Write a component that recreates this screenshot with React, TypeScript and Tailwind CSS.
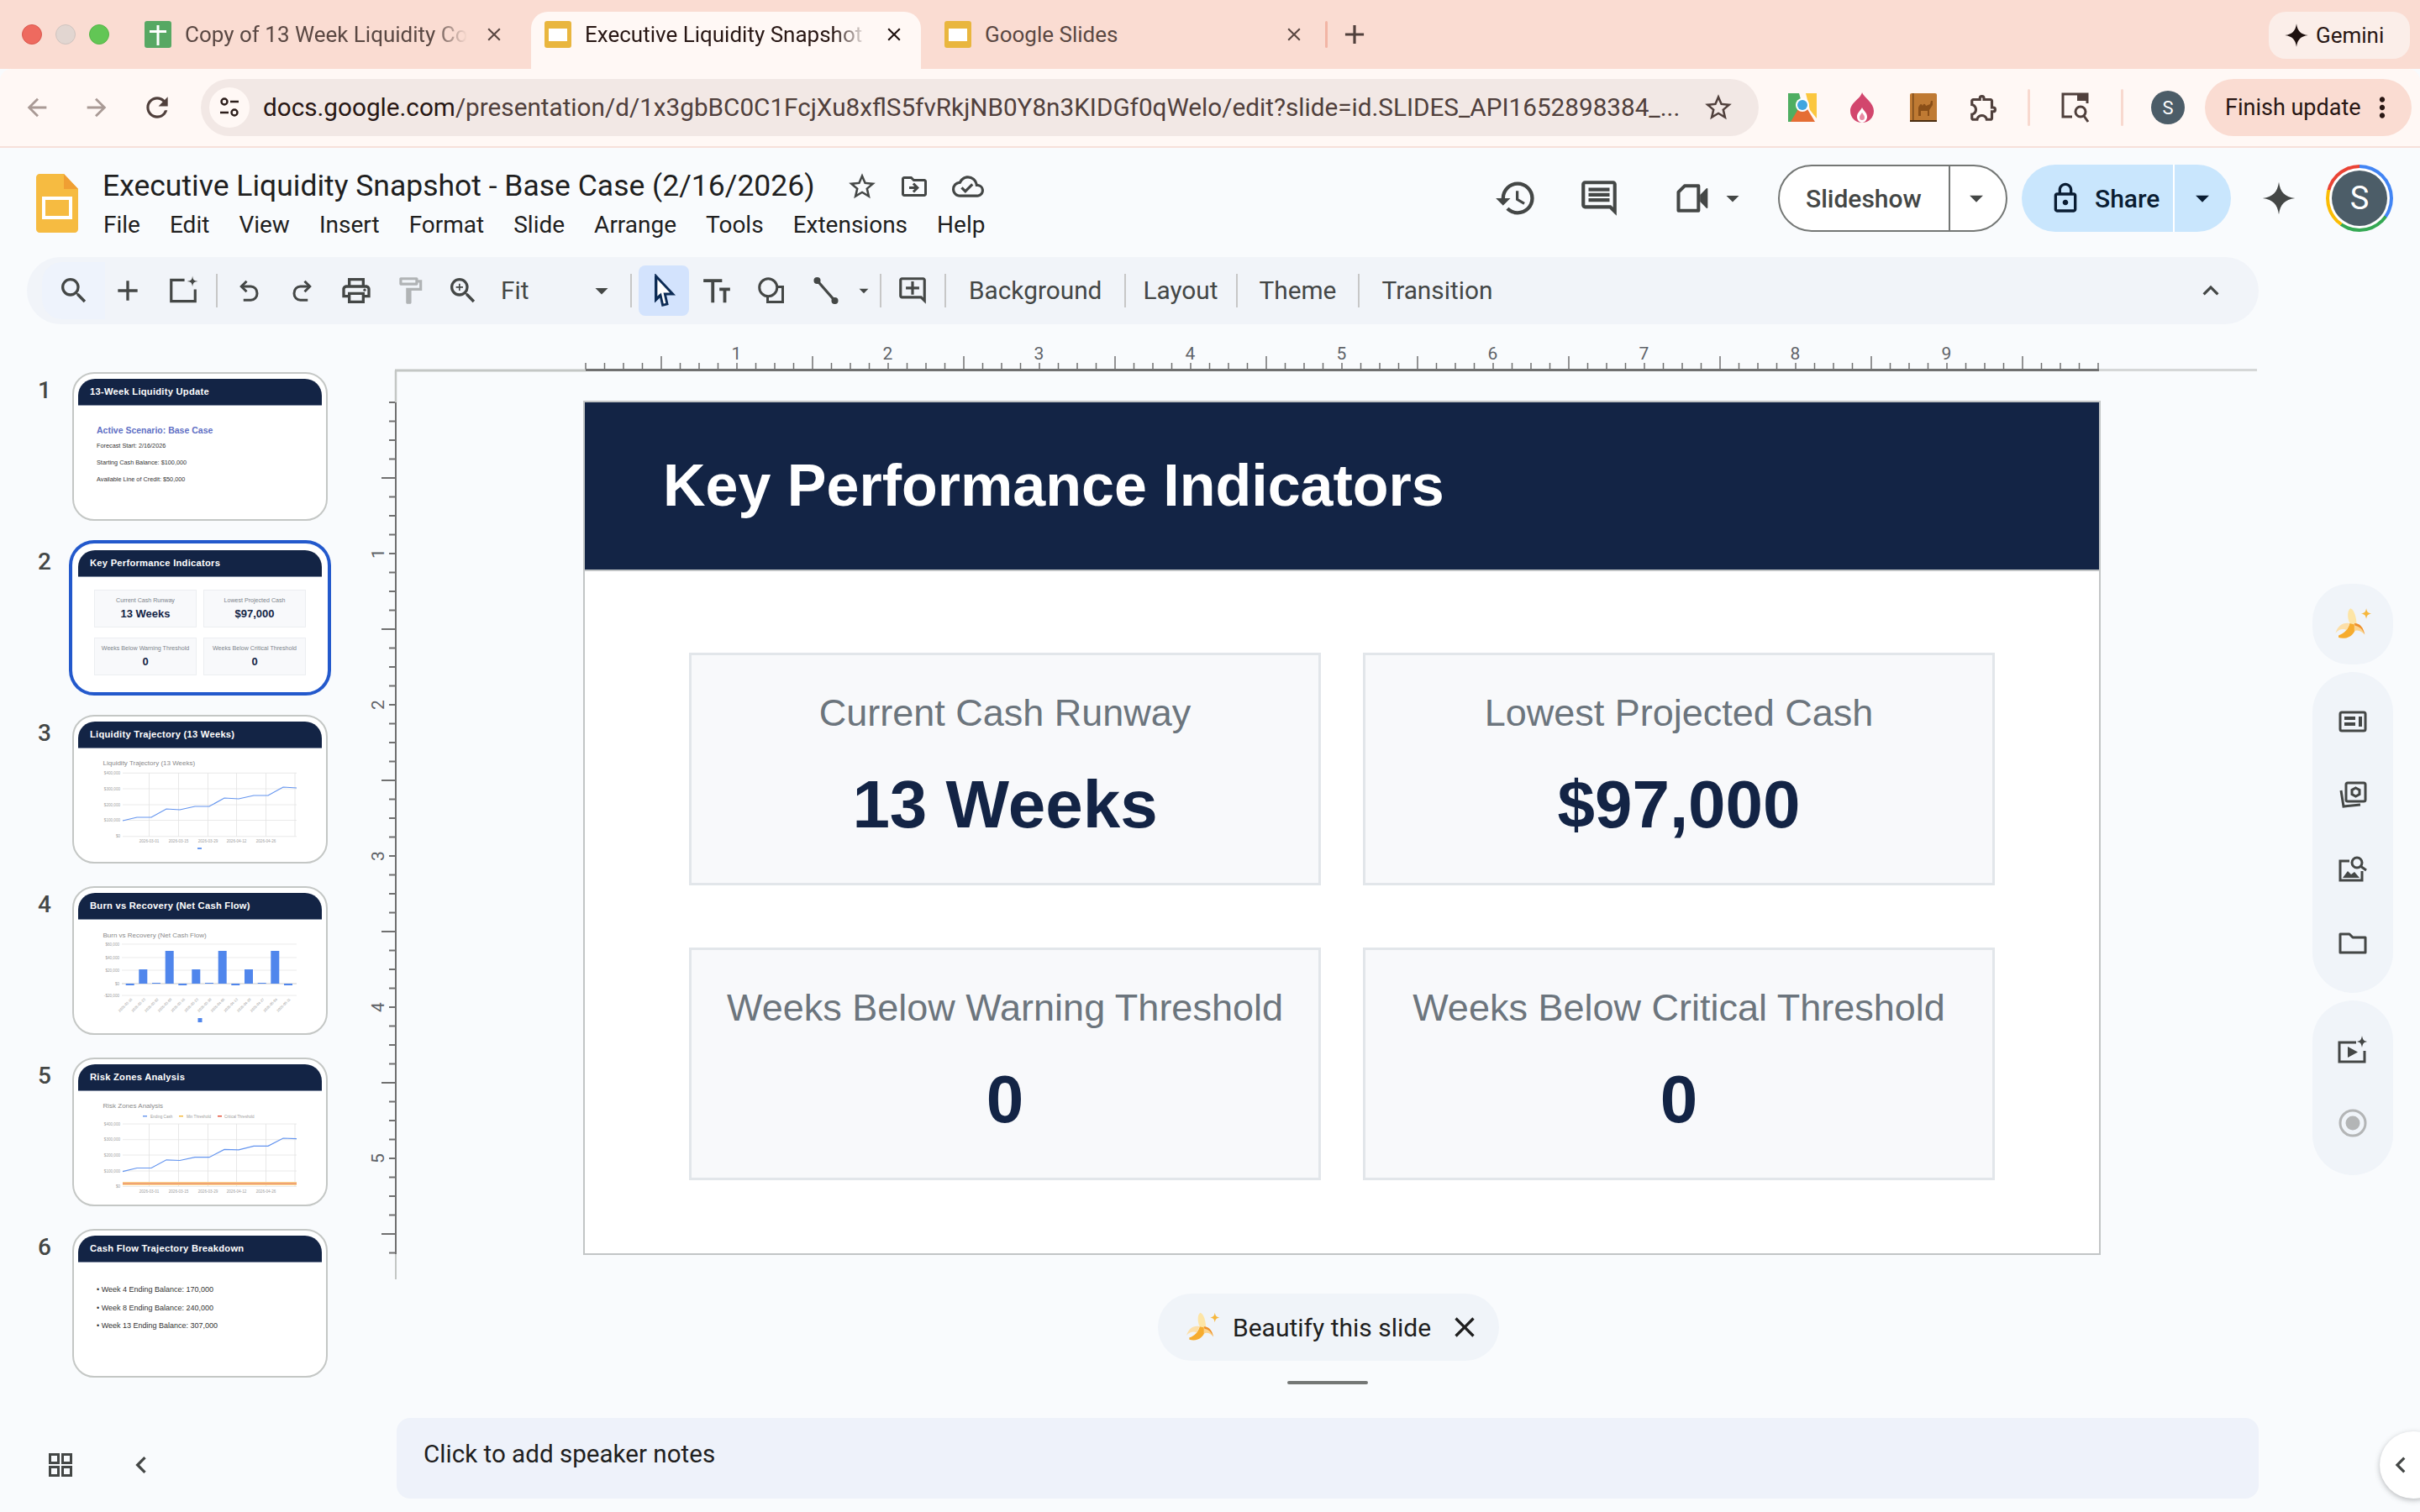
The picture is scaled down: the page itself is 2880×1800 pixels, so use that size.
import React from "react";
import {
  MdSearch, MdAdd, MdOutlinePrint, MdOutlineFormatPaint, MdOutlineZoomIn,
  MdOutlineAddComment, MdArrowDropDown, MdStarBorder, MdOutlineDriveFileMove, MdOutlineCloudDone, MdOutlineLock,
  MdRefresh, MdArrowBack, MdArrowForward, MdClose, MdOutlineExtension, MdMoreVert, MdChevronLeft, MdKeyboardArrowUp,
  MdHistory, MdOutlineComment, MdAdd as MdPlus,
} from "react-icons/md";

const Spark = ({ size = 40, color = "#444746" }: { size?: number; color?: string }) => (
  <svg width={size} height={size} viewBox="0 0 24 24"><path d="M12 1C13 8 16 11 23 12C16 13 13 16 12 23C11 16 8 13 1 12C8 11 11 8 12 1Z" fill={color} /></svg>
);

const Banana = ({ size = 44 }: { size?: number }) => (
  <svg width={size} height={size} viewBox="0 0 56 48">
    <path d="M24 23C20 15 21 5 25 3C30 5 33 15 33 25Z" fill="#fde5a6" />
    <path d="M9 42C20 45 31 40 33 25L24 23C22 31 16 37 9 39Z" fill="#f6ac2f" />
    <path d="M24 23C16 21 8 25 5 36C10 30 16 30 20 32Z" fill="#fcdfa8" />
    <path d="M30 23C38 23 42 29 44 38C40 34 36 31 30 33Z" fill="#fbd48e" />
    <path d="M30 23C38 23 42 29 44 38C41 31 37 27 31 26Z" fill="#ee8f2c" />
    <path d="M46 3C47 8 48 9 53 10C48 11 47 12 46 17C45 12 44 11 39 10C44 9 45 8 46 3Z" fill="#f6b73c" />
  </svg>
);

const SheetsIcon = () => (
  <svg width="32" height="32" viewBox="0 0 32 32"><rect width="32" height="32" rx="3" fill="#57a863" /><rect x="14.5" y="5" width="3" height="24" fill="#fff" /><rect x="6" y="11" width="20" height="3" fill="#fff" /></svg>
);
const SlidesTabIcon = () => (
  <svg width="32" height="32" viewBox="0 0 32 32"><rect width="32" height="32" rx="3" fill="#e9b63e" /><rect x="5" y="9" width="22" height="15" fill="#fff" /></svg>
);

const Tab = ({ icon, text, active, mask }: { icon: React.ReactNode; text: string; active?: boolean; mask?: boolean }) => (
  <div className={`flex h-[68px] w-[464px] items-center rounded-t-[20px] pb-[14px] pl-4 ${active ? "bg-[#fff8f5] text-[#281714]" : "text-[#5a4843]"}`}>
    {icon}
    <div className={`ml-4 w-[336px] whitespace-nowrap text-[26px] ${mask ? "[mask-image:linear-gradient(90deg,#000_88%,transparent)]" : ""}`}>{text}</div>
    <MdClose className={`ml-[19px] ${active ? "text-[#1f1210]" : "text-[#5a4843]"}`} size={26} />
  </div>
);

const ExtChrome = () => (
  <svg width="34" height="34" viewBox="0 0 34 34">
    <path d="M0 0H13L17 14L8 34H0Z" fill="#4fae61" /><path d="M21 0H34V30L26 20Z" fill="#fbc73f" /><path d="M3 34L12 19H23L32 34Z" fill="#e56e34" />
    <circle cx="17" cy="14" r="8" fill="#fff" /><circle cx="17" cy="14" r="6" fill="#3fa6e0" />
  </svg>
);
const ExtFlame = () => (
  <svg width="30" height="36" viewBox="0 0 30 36">
    <path d="M15 0C17 6 29 12 29 22C29 30 23 36 15 36C7 36 1 30 1 22C1 12 13 8 15 0Z" fill="#d2466d" />
    <path d="M15 18C17 22 21 24 21 29C21 33 18 36 15 36C12 36 9 33 9 29C9 24 13 22 15 18Z" fill="#fff" />
    <path d="M15 24C16 26 18 27 18 30C18 32 17 33 15 33C13 33 12 32 12 30C12 27 14 26 15 24Z" fill="#e88aa4" />
  </svg>
);
const ExtCamel = () => (
  <svg width="32" height="34" viewBox="0 0 32 34">
    <rect width="32" height="34" rx="2" fill="#bf7a33" /><rect y="32" width="32" height="2" fill="#4a2d10" /><rect x="3" width="1.5" height="32" fill="#7a4a1c" />
    <path d="M10 27V17C12 12 14 12 15 15C16 12 18 12 19 15L24 13L25 9H27V14L23 20V27H21V21H13V27Z" fill="#8a4f18" />
  </svg>
);
const TabSearch = () => (
  <svg width="36" height="38" viewBox="0 0 36 38" fill="none" stroke="#50403c" strokeWidth="3">
    <path d="M14 30H3V3H32V14" /><rect x="20" y="2" width="13" height="9" fill="#50403c" stroke="none" /><circle cx="24" cy="24" r="6" /><path d="M28 29L33 36" />
  </svg>
);
const SiteInfo = () => (
  <svg width="26" height="26" viewBox="0 0 26 26" fill="none" stroke="#2c1e1b" strokeWidth="2.4">
    <circle cx="7" cy="6" r="3.5" /><path d="M14 6H24M2 19H12" /><circle cx="19" cy="19" r="3.5" />
  </svg>
);

const SlidesLogo = () => (
  <svg width="50" height="70" viewBox="0 0 50 70">
    <path d="M4 0H33L50 18V66C50 68 48 70 46 70H4C2 70 0 68 0 66V4C0 2 2 0 4 0Z" fill="#f6bb41" />
    <path d="M33 0L50 18H33Z" fill="#f09f33" />
    <rect x="9" y="29" width="32" height="23" fill="#f6bb41" stroke="#fff" strokeWidth="4" />
  </svg>
);

const CursorIcon = () => (
  <svg width="32" height="40" viewBox="0 0 24 30" fill="none" stroke="#0c2b55" strokeWidth="2.4" strokeLinejoin="miter">
    <path d="M5 2L20 18H13L15 27L11 28L9 19L5 23Z" fill="#fff" strokeWidth="2.2" /><path d="M5 2L5 23L9 19" stroke="#0c2b55" />
  </svg>
);
const TextBoxIcon = () => (
  <svg width="38" height="38" viewBox="0 0 24 24" fill="none" stroke="#444746" strokeWidth="2.4">
    <path d="M2 4.500H16M9 4.500V21" /><path d="M14 11H22M18 11V21" />
  </svg>
);
const ShapeIcon = () => (
  <svg width="36" height="36" viewBox="0 0 24 24" fill="none" stroke="#444746" strokeWidth="2">
    <circle cx="9.5" cy="9.5" r="7" /><path d="M17 9H21V21H9V17" />
  </svg>
);
const LineIcon = () => (
  <svg width="36" height="36" viewBox="0 0 24 24" fill="#444746" stroke="#444746" strokeWidth="2.2">
    <path d="M5 4L19 20" /><circle cx="5" cy="4" r="1.6" /><circle cx="19" cy="20" r="1.6" />
  </svg>
);
const NewSlideIcon = () => (
  <svg width="38" height="38" viewBox="0 0 24 24" fill="none" stroke="#444746" strokeWidth="2">
    <path d="M13 4H3V20H21V11" /><path d="M19 1C19.400 4 20 4.600 23 5C20 5.400 19.400 6 19 9C18.600 6 18 5.400 15 5C18 4.600 18.600 4 19 1Z" fill="#444746" stroke="none" />
  </svg>
);
const UndoIcon = ({ flip }: { flip?: boolean }) => (
  <svg width="30" height="30" viewBox="0 0 24 24" fill="none" stroke="#444746" strokeWidth="2.4" className={flip ? "-scale-x-100" : ""}>
    <path d="M10 3L5 8L10 13" /><path d="M5 8H14C17.300 8 20 10.700 20 14.500C20 18.300 17.300 21 14 21H7" />
  </svg>
);
const CameraIcon = () => (
  <svg width="44" height="44" viewBox="0 0 24 24" fill="none" stroke="#444746" strokeWidth="2.2" strokeLinejoin="round">
    <path d="M7 4H16V20H3V8Z" /><path d="M17.500 10L21.500 6V18L17.500 14Z" fill="#444746" strokeWidth="1" />
  </svg>
);

const Sep = ({ className = "" }: { className?: string }) => <div className={`h-[40px] w-[2px] shrink-0 bg-[#c7c7c7] ${className}`} />;
const Slot = ({ w, children, className = "" }: { w: string; children: React.ReactNode; className?: string }) => (
  <div className={`flex shrink-0 items-center justify-center text-[#444746] ${w} ${className}`}>{children}</div>
);
const Word = ({ children }: { children: React.ReactNode }) => <span className="text-[29.800px] text-[#444746]">{children}</span>;

const Header = ({ title }: { title: string }) => (
  <div className="flex h-[32px] items-center border-b border-[#7f8aa0] bg-[#132445] pl-[14px] font-['Liberation_Sans',Arial,sans-serif] text-[11.2px] font-bold tracking-[0.25px] whitespace-nowrap text-white">{title}</div>
);

const Mini = ({ label, value }: { label: string; value: string }) => (
  <div className="flex h-[45px] flex-col items-center border border-[#eceef1] bg-[#f8f9fb] pt-[6px] font-['Liberation_Sans',Arial,sans-serif]">
    <div className="text-[7.1px] leading-[12px] whitespace-nowrap text-[#7d848b]">{label}</div>
    <div className="mt-[1px] text-[13px] leading-[18px] font-bold text-[#132445]">{value}</div>
  </div>
);

const chartX = [84.5, 119.5, 154.5, 188.5, 223.5, 258];
const Trend = ({ grid, pts, labels, xy }: { grid: number[]; pts: string; labels: string[]; xy: number }) => (
  <>
    {grid.map((y, i) => (
      <g key={y}>
        <line x1="53" x2="260" y1={y} y2={y} stroke="#e4e4e4" strokeWidth="0.8" />
        <text x="50" y={y + 1.6} fontSize="4.6" textAnchor="end" fill="#a0a0a0">{labels[i]}</text>
      </g>
    ))}
    {chartX.map((x) => <line key={x} x1={x} x2={x} y1={grid[0]} y2={grid[4]} stroke="#e2e2e2" strokeWidth="0.8" />)}
    {["2026-03-01", "2026-03-15", "2026-03-29", "2026-04-12", "2026-04-26"].map((t, i) => (
      <text key={t} x={chartX[i]} y={xy} fontSize="4.6" textAnchor="middle" fill="#a0a0a0">{t}</text>
    ))}
    <polyline points={pts} fill="none" stroke="#6394ef" strokeWidth="1.2" />
  </>
);
const money = ["$400,000", "$300,000", "$200,000", "$100,000", "$0"];

const Chart3 = () => (
  <svg width="290" height="131" viewBox="0 0 290 131" className="font-['Liberation_Sans',Arial,sans-serif]">
    <text x="29.500" y="20" fontSize="8" fill="#8a8a8a">Liquidity Trajectory (13 Weeks)</text>
    <Trend grid={[29.3, 48, 67, 85.5, 104.8]} labels={money} xy={112}
      pts="53,86 70,82 87,82 105,72 121,73 139,69 156,69 174,59 191,60 209,56 226,56 244,46 260,47" />
    <rect x="142" y="118" width="5" height="2" fill="#6d9cf0" />
  </svg>
);
const Chart4 = () => {
  const xs = [61.7, 77.3, 93, 108.7, 124.3, 140.3, 156, 171.7, 187.3, 203, 218.7, 234.3, 250];
  const tops = [78, 59, 75, 37, 78, 59, 75, 37, 78, 59, 75, 37, 78];
  const dates = ["2026-02-16", "2026-02-23", "2026-03-02", "2026-03-09", "2026-03-16", "2026-03-23", "2026-03-30", "2026-04-06", "2026-04-13", "2026-04-20", "2026-04-27", "2026-05-04", "2026-05-11"];
  const gy = [29, 45, 60, 76, 90];
  const gl = ["$60,000", "$40,000", "$20,000", "$0", "-$20,000"];
  return (
    <svg width="290" height="131" viewBox="0 0 290 131" className="font-['Liberation_Sans',Arial,sans-serif]">
      <text x="29.500" y="21" fontSize="8" fill="#8a8a8a">Burn vs Recovery (Net Cash Flow)</text>
      {gy.map((y, i) => (
        <g key={y}>
          <line x1="52" x2="260" y1={y} y2={y} stroke={i === 3 ? "#bdbdbd" : "#e6e6e6"} strokeWidth="0.8" />
          <text x="49" y={y + 1.6} fontSize="4.6" textAnchor="end" fill="#a0a0a0">{gl[i]}</text>
        </g>
      ))}
      {xs.map((x, i) => {
        const t = tops[i];
        return <rect key={x} x={x - 5} y={t > 76 ? 76 : t} width="10" height={t > 76 ? t - 76 : 76 - t} fill="#5086ec" />;
      })}
      {dates.map((d, i) => (
        <text key={d} x={xs[i] + 3} y="95" fontSize="4.200" textAnchor="end" fill="#a0a0a0" transform={`rotate(-45 ${xs[i] + 3} 95)`}>{d}</text>
      ))}
      <rect x="142.500" y="117" width="5" height="5" fill="#5086ec" />
    </svg>
  );
};
const Chart5 = () => (
  <svg width="290" height="131" viewBox="0 0 290 131" className="font-['Liberation_Sans',Arial,sans-serif]">
    <text x="29.500" y="20" fontSize="8" fill="#8a8a8a">Risk Zones Analysis</text>
    <rect x="77" y="29" width="5" height="1.500" fill="#6d9cf0" /><text x="86" y="31.500" fontSize="4.600" fill="#a0a0a0">Ending Cash</text>
    <rect x="120" y="29" width="5" height="1.500" fill="#f6bb41" /><text x="129" y="31.500" fontSize="4.600" fill="#a0a0a0">Min Threshold</text>
    <rect x="166" y="29" width="5" height="1.500" fill="#e5533d" /><text x="174" y="31.500" fontSize="4.600" fill="#a0a0a0">Critical Threshold</text>
    <Trend grid={[39, 57.700, 76, 95, 113.500]} labels={money} xy={121}
      pts="53,95.600 70,91.500 87,91.500 105,81.800 121,82.500 139,78.700 156,78.700 174,69.400 191,69.800 209,65.300 226,65.300 244,56 260,56.700" />
    <rect x="53" y="108" width="207" height="4" fill="#fbd38d" />
    <line x1="53" x2="260" y1="110" y2="110" stroke="#e5735d" strokeWidth="1" />
  </svg>
);

const Thumb = ({ n, title, active, children }: { n: number; title: string; active?: boolean; children: React.ReactNode }) => (
  <div className="mb-[27px] flex h-[177px]">
    <div className="w-[61px] text-right text-[28px] leading-[44px] font-medium text-[#444746]">{n}</div>
    <div className={`ml-[25px] h-[177px] w-[304px] rounded-[26px] border-2 bg-white px-[5px] py-[6px] ${active ? "border-white shadow-[0_0_0_4px_#2359cc]" : "border-[#c4c7c5]"}`}>
      <div className="h-full overflow-hidden rounded-t-[20px]">
        <Header title={title} />
        {children}
      </div>
    </div>
  </div>
);

const Filmstrip = () => (
  <div className="flex w-[440px] shrink-0 flex-col pt-[57px]">
    <Thumb n={1} title="13-Week Liquidity Update">
      <div className="pt-[23px] pl-[22px] font-['Liberation_Sans',Arial,sans-serif]">
        <div className="mb-[3px] text-[10.500px] leading-[12px] font-bold text-[#5f70c4]">Active Scenario: Base Case</div>
        {["Forecast Start: 2/16/2026", "Starting Cash Balance: $100,000", "Available Line of Credit: $50,000"].map((t) => (
          <div key={t} className="text-[7.3px] leading-[20px] text-[#333]">{t}</div>
        ))}
      </div>
    </Thumb>
    <Thumb n={2} title="Key Performance Indicators" active>
      <div className="grid grid-cols-[122px_122px] gap-x-[8px] gap-y-[12px] pt-[15px] pl-[19px]">
        <Mini label="Current Cash Runway" value="13 Weeks" />
        <Mini label="Lowest Projected Cash" value="$97,000" />
        <Mini label="Weeks Below Warning Threshold" value="0" />
        <Mini label="Weeks Below Critical Threshold" value="0" />
      </div>
    </Thumb>
    <Thumb n={3} title="Liquidity Trajectory (13 Weeks)"><Chart3 /></Thumb>
    <Thumb n={4} title="Burn vs Recovery (Net Cash Flow)"><Chart4 /></Thumb>
    <Thumb n={5} title="Risk Zones Analysis"><Chart5 /></Thumb>
    <Thumb n={6} title="Cash Flow Trajectory Breakdown">
      <div className="pt-[22px] pl-[22px] font-['Liberation_Sans',Arial,sans-serif] text-[9px] leading-[21.500px] text-[#333]">
        <div>• Week 4 Ending Balance: 170,000</div>
        <div>• Week 8 Ending Balance: 240,000</div>
        <div>• Week 13 Ending Balance: 307,000</div>
      </div>
    </Thumb>
    <div className="mt-[57px] flex items-center pl-[58px]">
      <svg width="28" height="28" viewBox="0 0 28 28" fill="none" stroke="#444746" strokeWidth="3">
        <rect x="1.500" y="1.500" width="10" height="10" /><rect x="16.500" y="1.500" width="10" height="10" /><rect x="1.500" y="16.500" width="10" height="10" /><rect x="16.500" y="16.500" width="10" height="10" />
      </svg>
      <MdChevronLeft size={40} className="ml-[62px] text-[#444746]" />
    </div>
  </div>
);

const range = (n: number) => Array.from({ length: n }, (_, i) => i);

const TopRuler = () => (
  <svg width="2250" height="55" viewBox="440 386 2250 55" className="block shrink-0 overflow-visible font-[Roboto,sans-serif]">
    {range(81).map((i) => {
      const x = 697 + i * 22.5;
      return <line key={i} x1={x} x2={x} y1={i % 8 === 4 ? 424 : 432} y2="441" stroke="#707070" strokeWidth="1.5" />;
    })}
    {range(9).map((i) => <text key={i} x={876.5 + i * 180} y="428" fontSize="21" textAnchor="middle" fill="#5f6368">{i + 1}</text>)}
  </svg>
);

const SideRuler = () => (
  <svg width="254" height="1082" viewBox="440 441 254 1082" className="block shrink-0 overflow-visible font-[Roboto,sans-serif]">
    <line x1="470" x2="697" y1="441" y2="441" stroke="#c4c7c5" strokeWidth="3" />
    <line x1="471" x2="471" y1="441" y2="479" stroke="#c4c7c5" strokeWidth="2.500" />
    <line x1="471" x2="471" y1="479" y2="1493" stroke="#707070" strokeWidth="2" />
    <line x1="471" x2="471" y1="1493" y2="1523" stroke="#c4c7c5" strokeWidth="2" />
    {range(46).map((i) => {
      const y = 479 + i * 22.5;
      return <line key={i} x1={i % 8 === 4 ? 454 : 463} x2="470" y1={y} y2={y} stroke="#707070" strokeWidth="2" />;
    })}
    {range(5).map((i) => {
      const y = 659 + i * 180;
      return <text key={i} x="457" y={y} fontSize="21" textAnchor="middle" fill="#5f6368" transform={`rotate(-90 457 ${y})`}>{i + 1}</text>;
    })}
  </svg>
);

const Kpi = ({ label, value }: { label: string; value: string }) => (
  <div className="flex h-[277px] flex-col items-center border-[3px] border-[#e2e6ea] bg-[#f8f9fb] pt-[40px]">
    <div className="text-[45px] leading-[58px] whitespace-nowrap text-[#6c757d]">{label}</div>
    <div className="mt-[31px] text-[80px] leading-[98px] font-bold text-[#132445]">{value}</div>
  </div>
);

const Slide = () => (
  <div className="mt-[36px] h-[1017px] w-[1806px] shrink-0 border-2 border-[#c2c5c6] bg-white font-['Liberation_Sans',Arial,sans-serif]">
    <div className="flex h-[199px] items-center bg-[#132445] pl-[93px] text-[70px] font-bold whitespace-nowrap text-white">Key Performance Indicators</div>
    <div className="border-t-2 border-[#c2c5c6] pt-[97px] pl-[124px]">
      <div className="grid grid-cols-[752px_752px] gap-x-[50px] gap-y-[74px]">
        <Kpi label="Current Cash Runway" value="13 Weeks" />
        <Kpi label="Lowest Projected Cash" value="$97,000" />
        <Kpi label="Weeks Below Warning Threshold" value="0" />
        <Kpi label="Weeks Below Critical Threshold" value="0" />
      </div>
    </div>
  </div>
);

const Center = () => (
  <div className="relative w-[2250px] shrink-0">
    <TopRuler />
    <div className="relative flex h-[1079px]">
      <SideRuler />
      <Slide />
      <div className="absolute top-[-2px] left-[2058px] h-[3px] w-[188px] bg-[#d5d7d7]" />
      <div className="absolute top-[-2px] left-[257px] h-[3px] w-[1801px] bg-[#707070]" />
    </div>
    <div className="mt-[20px] ml-[938px] flex h-[80px] w-[406px] items-center rounded-full bg-[#f0f4f9] pl-[30px]">
      <Banana size={46} />
      <span className="ml-[13px] text-[30px] whitespace-nowrap text-[#1f1f1f]">Beautify this slide</span>
      <MdClose size={40} className="ml-[20px] text-[#1f1f1f]" />
    </div>
    <div className="mt-[24px] ml-[1092px] h-[4px] w-[96px] rounded-full bg-[#747775]" />
    <div className="mt-[40px] ml-[32px] flex h-[96px] w-[2216px] items-center rounded-[16px] bg-[#eef2fa] pb-[10px] pl-[32px] text-[29.600px] text-[#1f1f1f]">Click to add speaker notes</div>
  </div>
);

const SideBtn = ({ children }: { children: React.ReactNode }) => (
  <div className="flex h-[88px] items-center justify-center">{children}</div>
);

const RightRail = () => {
  const s = { fill: "none", stroke: "#444746", strokeWidth: 3 };
  return (
    <div className="ml-[62px] flex w-[96px] shrink-0 flex-col gap-[9px] pt-[309px]">
      <div className="flex h-[96px] items-center justify-center rounded-[44px] bg-[#f0f4f9]"><Banana size={50} /></div>
      <div className="flex h-[382px] flex-col justify-center rounded-[48px] bg-[#f0f4f9]">
        <SideBtn>
          <svg width="34" height="26" viewBox="0 0 34 26" {...s}><rect x="2" y="2" width="30" height="22" rx="2" /><path d="M7 9H20M7 16H20" strokeWidth="4" /><rect x="24" y="7" width="4" height="12" fill="#444746" stroke="none" /></svg>
        </SideBtn>
        <SideBtn>
          <svg width="34" height="34" viewBox="0 0 34 34" {...s}><rect x="9" y="2" width="23" height="22" rx="2" /><path d="M20.500 8L25 10.500V15.500L20.500 18L16 15.500V10.500Z" /><path d="M3 11L6 30L26 28" /></svg>
        </SideBtn>
        <SideBtn>
          <svg width="34" height="32" viewBox="0 0 34 32" {...s}><path d="M13 6H2V29H28V18" /><circle cx="22" cy="8" r="6" /><path d="M26 12L33 17" /><path d="M5 26L11 18L15 22L19 19L25 26Z" fill="#444746" stroke="none" /></svg>
        </SideBtn>
        <SideBtn>
          <svg width="34" height="26" viewBox="0 0 34 26" {...s}><path d="M2 2H13L17 6H32V24H2Z" strokeLinejoin="round" /></svg>
        </SideBtn>
      </div>
      <div className="flex h-[208px] flex-col justify-center rounded-[48px] bg-[#f0f4f9]">
        <div className="-mt-[4px]">
          <SideBtn>
            <svg width="36" height="34" viewBox="0 0 36 34" {...s}><path d="M22 9H2V32H32V19" /><path d="M12 14V27L24 20.500Z" fill="#444746" stroke="none" /><path d="M29 1C30 6 31 7 35 8C31 9 30 10 29 15C28 10 27 9 23 8C27 7 28 6 29 1Z" fill="#444746" stroke="none" /></svg>
          </SideBtn>
        </div>
        <SideBtn>
          <svg width="34" height="34" viewBox="0 0 34 34"><circle cx="17" cy="17" r="15" fill="none" stroke="#b3b5b6" strokeWidth="3" /><circle cx="17" cy="17" r="8.500" fill="#b3b5b6" /></svg>
        </SideBtn>
      </div>
    </div>
  );
};

export default function App() {
  return (
    <div className="relative flex h-[1800px] w-[2880px] flex-col overflow-hidden bg-[#f9fbfd] font-[Roboto,sans-serif]">
      {/* Browser tab strip */}
      <div className="flex h-[82px] shrink-0 items-end bg-[#fadcd2]">
        <div className="flex h-[82px] items-center gap-[16px] pl-[26px]">
          <div className="h-[24px] w-[24px] rounded-full border border-[#d9584e] bg-[#ee6a5f]" />
          <div className="h-[24px] w-[24px] rounded-full border border-[#cfc4bf] bg-[#e2d6d1]" />
          <div className="h-[24px] w-[24px] rounded-full border border-[#55b548] bg-[#62c655]" />
        </div>
        <div className="ml-[26px] flex gap-[12px]">
          <Tab icon={<SheetsIcon />} text="Copy of 13 Week Liquidity Co" mask />
          <Tab icon={<SlidesTabIcon />} text="Executive Liquidity Snapshot" active mask />
          <Tab icon={<SlidesTabIcon />} text="Google Slides" />
        </div>
        <div className="flex h-[68px] items-center pb-[14px]">
          <div className="ml-[5px] h-[32px] w-[3px] rounded bg-[#f2b5a5]" />
          <MdPlus size={38} className="ml-[13px] text-[#50403c]" />
        </div>
        <div className="mb-[12px] ml-[1069px] flex h-[56px] w-[168px] items-center rounded-[20px] bg-[#fbeee9] pl-[18px] text-[26px] text-[#281714]">
          <Spark size={30} color="#1f1210" />
          <span className="ml-[8px]">Gemini</span>
        </div>
      </div>

      {/* Browser address row */}
      <div className="flex h-[94px] shrink-0 items-center rounded-t-[14px] border-b-2 border-[#f6e0da] bg-[#fff8f5]">
        <MdArrowBack size={34} className="ml-[27px] text-[#a99a95]" />
        <MdArrowForward size={34} className="ml-[37px] text-[#a99a95]" />
        <MdRefresh size={38} className="ml-[36px] text-[#50403c]" />
        <div className="ml-[33px] flex h-[68px] w-[1854px] items-center rounded-full bg-[#f2e8e5]">
          <div className="ml-[10px] flex h-[48px] w-[48px] items-center justify-center rounded-full bg-[#fff8f5]"><SiteInfo /></div>
          <div className="ml-[16px] w-[1690px] text-[29.700px] whitespace-nowrap text-[#50403c]">
            <span className="text-[#281714]">docs.google.com</span>/presentation/d/1x3gbBC0C1FcjXu8xflS5fvRkjNB0Y8n3KIDGf0qWelo/edit?slide=id.SLIDES_API1652898384_...
          </div>
          <MdStarBorder size={38} className="ml-[23px] text-[#50403c]" />
        </div>
        <div className="ml-[35px] flex w-[34px] justify-center"><ExtChrome /></div>
        <div className="ml-[37px] flex w-[34px] justify-center"><ExtFlame /></div>
        <div className="ml-[39px] flex w-[34px] justify-center"><ExtCamel /></div>
        <MdOutlineExtension size={38} className="ml-[36px] text-[#50403c]" />
        <div className="ml-[33px] h-[44px] w-[3px] rounded bg-[#f8d9cf]" />
        <div className="ml-[36px] flex w-[36px] justify-center"><TabSearch /></div>
        <div className="ml-[36px] h-[44px] w-[3px] rounded bg-[#f8d9cf]" />
        <div className="ml-[33px] flex h-[40px] w-[40px] items-center justify-center rounded-full bg-[#4c5d68] text-[22px] text-white">S</div>
        <div className="ml-[24px] flex h-[68px] w-[246px] items-center rounded-full bg-[#fadcd2] pl-[24px] text-[27px] whitespace-nowrap text-[#281714]">
          Finish update
          <MdMoreVert size={38} className="ml-[6px] text-[#281714]" />
        </div>
      </div>

      {/* Docs header */}
      <div className="flex h-[130px] shrink-0">
        <div className="mt-[31px] ml-[43px]"><SlidesLogo /></div>
        <div className="ml-[29px] flex flex-col pt-[24px]">
          <div className="flex h-[44px] items-center">
            <span className="text-[35.500px] whitespace-nowrap text-[#1f1f1f]">Executive Liquidity Snapshot - Base Case (2/16/2026)</span>
            <MdStarBorder size={38} className="ml-[37px] text-[#444746]" />
            <MdOutlineDriveFileMove size={36} className="ml-[25px] text-[#444746]" />
            <MdOutlineCloudDone size={38} className="ml-[27px] text-[#444746]" />
          </div>
          <div className="mt-[3px] ml-[1px] flex gap-[35px] text-[28px] leading-[42px] text-[#1f1f1f]">
            {["File", "Edit", "View", "Insert", "Format", "Slide", "Arrange", "Tools", "Extensions", "Help"].map((m) => <span key={m}>{m}</span>)}
          </div>
        </div>
        <div className="mt-[20px] ml-auto flex h-[80px] items-center pr-[32px]">
          <MdHistory size={52} className="text-[#444746]" />
          <MdOutlineComment size={50} className="ml-[48px] text-[#444746]" />
          <div className="ml-[64px]"><CameraIcon /></div>
          <MdArrowDropDown size={36} className="ml-[8px] text-[#444746]" />
          <div className="ml-[36px] flex h-[80px] w-[273px] items-center rounded-full border-2 border-[#747775] bg-white">
            <span className="ml-[31px] text-[30px] font-medium text-[#444746]">Slideshow</span>
            <div className="ml-[32px] h-full w-[2px] bg-[#747775]" />
            <MdArrowDropDown size={38} className="ml-[12px] text-[#444746]" />
          </div>
          <div className="ml-[17px] flex h-[80px] w-[249px] items-center rounded-full bg-[#c9e6fd] text-[#0a1d33]">
            <MdOutlineLock size={40} className="ml-[32px]" />
            <span className="ml-[15px] text-[30px] font-medium">Share</span>
            <div className="ml-[16px] h-full w-[2px] bg-white" />
            <MdArrowDropDown size={38} className="ml-[14px]" />
          </div>
          <div className="ml-[36px]"><Spark size={42} /></div>
          <div className="relative ml-[35px] flex h-[80px] w-[80px] items-center justify-center rounded-full bg-[conic-gradient(#4285f4_0deg_125deg,#34a853_125deg_215deg,#fbbc04_215deg_285deg,#ea4335_285deg_360deg)]">
            <div className="flex h-[72px] w-[72px] items-center justify-center rounded-full bg-white">
              <div className="flex h-[66px] w-[66px] items-center justify-center rounded-full bg-[#4c5d68] text-[38px] text-white">S</div>
            </div>
          </div>
        </div>
      </div>

      {/* Slides toolbar */}
      <div className="ml-[32px] flex h-[80px] w-[2656px] shrink-0 items-center rounded-full bg-[#f1f4f9] pl-[18px]">
        <Slot w="w-[75px] h-[68px] rounded-l-[24px] bg-[#eef3fc]"><MdSearch size={40} /></Slot>
        <Slot w="w-[54px]"><MdAdd size={40} /></Slot>
        <Slot w="w-[78px]"><NewSlideIcon /></Slot>
        <Sep />
        <Slot w="w-[64px]" className="ml-[5px]"><UndoIcon /></Slot>
        <Slot w="w-[64px]"><UndoIcon flip /></Slot>
        <Slot w="w-[64px]"><MdOutlinePrint size={40} /></Slot>
        <Slot w="w-[64px]"><MdOutlineFormatPaint size={38} className="text-[#b0b3b5]" /></Slot>
        <Slot w="w-[62px]"><MdOutlineZoomIn size={40} /></Slot>
        <div className="w-[116px] pl-[14px]"><Word>Fit</Word></div>
        <Slot w="w-[36px]"><MdArrowDropDown size={38} /></Slot>
        <Sep className="ml-[16px]" />
        <div className="ml-[8px] flex h-[60px] w-[60px] items-center justify-center rounded-[8px] bg-[#d3e3fd]"><CursorIcon /></div>
        <Slot w="w-[65px]"><TextBoxIcon /></Slot>
        <Slot w="w-[65px]"><ShapeIcon /></Slot>
        <Slot w="w-[65px]"><LineIcon /></Slot>
        <Slot w="w-[26px]"><MdArrowDropDown size={34} /></Slot>
        <Sep className="ml-[6px]" />
        <Slot w="w-[64px]" className="ml-[5px]"><MdOutlineAddComment size={38} /></Slot>
        <Sep className="ml-[6px]" />
        <div className="ml-[27px]"><Word>Background</Word></div>
        <Sep className="ml-[27px]" />
        <div className="ml-[20px]"><Word>Layout</Word></div>
        <Sep className="ml-[21px]" />
        <div className="ml-[26px]"><Word>Theme</Word></div>
        <Sep className="ml-[26px]" />
        <div className="ml-[26px]"><Word>Transition</Word></div>
        <MdKeyboardArrowUp size={38} className="ml-[836px] text-[#444746]" />
      </div>

      {/* Workspace */}
      <div className="flex flex-1">
        <Filmstrip />
        <Center />
        <RightRail />
      </div>

      <div className="absolute top-[1704px] left-[2832px] flex h-[80px] w-[80px] items-center rounded-full bg-white pl-[6px] shadow-[0_2px_6px_rgba(60,64,67,0.35)]">
        <MdChevronLeft size={38} className="text-[#444746]" />
      </div>
    </div>
  );
}
